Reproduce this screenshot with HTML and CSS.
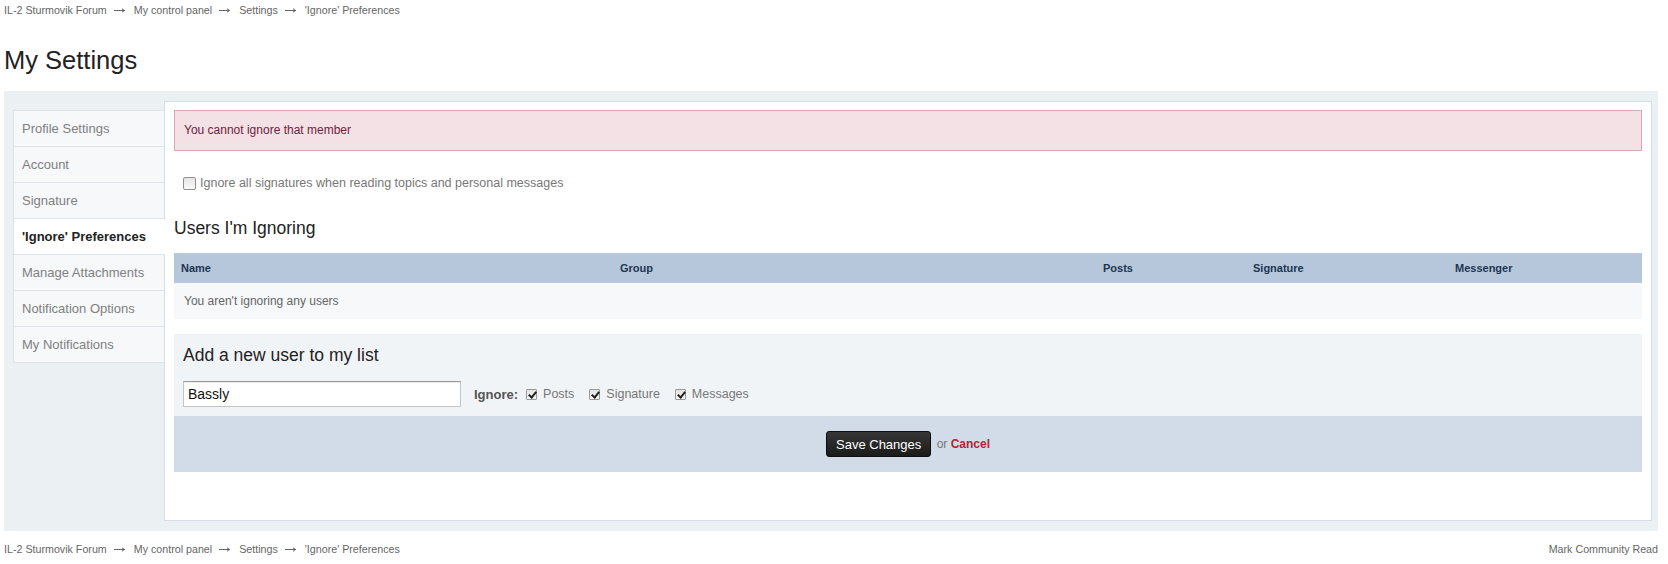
FILE: index.html
```html
<!DOCTYPE html>
<html lang="en">
<head>
    <meta charset="UTF-8">
    <title>My Settings - IL-2 Sturmovik Forum</title>
    <link rel="stylesheet" href="styles.css">
</head>
<body>
<div class="page">

    <div class="crumbs">
        <div class="trail">
            <a href="#">IL-2 Sturmovik Forum</a>
            <svg class="arrow" width="11" height="7" viewBox="0 0 11 7"><path d="M0 3.5H10.5M8 1.8L10.5 3.5L8 5.2" fill="none" stroke="#555" stroke-width="0.9"/></svg>
            <a href="#">My control panel</a>
            <svg class="arrow" width="11" height="7" viewBox="0 0 11 7"><path d="M0 3.5H10.5M8 1.8L10.5 3.5L8 5.2" fill="none" stroke="#555" stroke-width="0.9"/></svg>
            <a href="#">Settings</a>
            <svg class="arrow" width="11" height="7" viewBox="0 0 11 7"><path d="M0 3.5H10.5M8 1.8L10.5 3.5L8 5.2" fill="none" stroke="#555" stroke-width="0.9"/></svg>
            <a href="#">'Ignore' Preferences</a>
        </div>
    </div>

    <h1 class="title">My Settings</h1>

    <div class="layout">
        <ul class="tabs">
            <li><a href="#">Profile Settings</a></li>
            <li><a href="#">Account</a></li>
            <li><a href="#">Signature</a></li>
            <li class="active"><a href="#">'Ignore' Preferences</a></li>
            <li><a href="#">Manage Attachments</a></li>
            <li><a href="#">Notification Options</a></li>
            <li><a href="#">My Notifications</a></li>
        </ul>

        <div class="content">
            <div class="error">You cannot ignore that member</div>

            <label class="option">
                <input type="checkbox" class="check-plain">
                Ignore all signatures when reading topics and personal messages
            </label>

            <h2 class="section-title">Users I'm Ignoring</h2>

            <table class="list">
                <thead>
                    <tr>
                        <th class="col-name">Name</th>
                        <th class="col-group">Group</th>
                        <th class="col-posts">Posts</th>
                        <th class="col-sig">Signature</th>
                        <th>Messenger</th>
                    </tr>
                </thead>
                <tbody>
                    <tr>
                        <td colspan="5" class="empty">You aren't ignoring any users</td>
                    </tr>
                </tbody>
            </table>

            <div class="add-box">
                <h3>Add a new user to my list</h3>
                <div class="add-row">
                    <input type="text" class="text-input" value="Bassly">
                    <span class="ignore-label">Ignore:</span>
                    <label class="small-opt"><input type="checkbox" class="check-small" checked> Posts</label>
                    <label class="small-opt"><input type="checkbox" class="check-small" checked> Signature</label>
                    <label class="small-opt"><input type="checkbox" class="check-small" checked> Messages</label>
                </div>
            </div>

            <div class="submit-row">
                <button class="btn">Save Changes</button>
                <span class="or">or</span>
                <a href="#" class="cancel">Cancel</a>
            </div>
        </div>
    </div>

    <div class="crumbs bottom">
        <div class="trail">
            <a href="#">IL-2 Sturmovik Forum</a>
            <svg class="arrow" width="11" height="7" viewBox="0 0 11 7"><path d="M0 3.5H10.5M8 1.8L10.5 3.5L8 5.2" fill="none" stroke="#555" stroke-width="0.9"/></svg>
            <a href="#">My control panel</a>
            <svg class="arrow" width="11" height="7" viewBox="0 0 11 7"><path d="M0 3.5H10.5M8 1.8L10.5 3.5L8 5.2" fill="none" stroke="#555" stroke-width="0.9"/></svg>
            <a href="#">Settings</a>
            <svg class="arrow" width="11" height="7" viewBox="0 0 11 7"><path d="M0 3.5H10.5M8 1.8L10.5 3.5L8 5.2" fill="none" stroke="#555" stroke-width="0.9"/></svg>
            <a href="#">'Ignore' Preferences</a>
        </div>
        <a href="#" class="mark-read">Mark Community Read</a>
    </div>

</div>
</body>
</html>
```

FILE: styles.css
```css
body {
    margin: 0;
    font-family: 'Liberation Sans', Arial, sans-serif;
    font-size: 13px;
    color: #1c2837;
    background: #fff;
}

a {
    text-decoration: none;
}

.page {
    margin: 0 10px 0 4px;
}

/* Breadcrumbs */
.crumbs {
    display: flex;
    justify-content: space-between;
    padding-top: 3px;
    font-size: 10.7px;
    line-height: 14px;
}

.crumbs .trail {
    display: flex;
    align-items: center;
}

.crumbs a {
    color: #666;
}

.crumbs .arrow {
    margin: 1px 9px 0 7px;
}

.crumbs.bottom {
    padding-top: 0;
    margin-top: 11px;
}

.title {
    margin: 27px 0 0;
    font-size: 25.5px;
    line-height: 32px;
    font-weight: normal;
    color: #222;
}

/* Settings panel */
.layout {
    display: flex;
    align-items: flex-start;
    margin-top: 15px;
    padding: 10px 6px 10px 9px;
    background: #ebf0f3;
}

.tabs {
    width: 150px;
    flex-shrink: 0;
    margin: 9px 0 0;
    padding: 0;
    list-style: none;
    border-top: 1px solid #dde3e9;
    border-left: 1px solid #dde3e9;
}

.tabs li {
    height: 35px;
    line-height: 35px;
    background: #f6f8fa;
    border-bottom: 1px solid #dde3e9;
}

.tabs li a {
    display: block;
    padding-left: 8px;
    color: #808080;
}

.tabs li.active {
    position: relative;
    z-index: 1;
    margin-right: -1px;
    background: #fff;
}

.tabs li.active a {
    color: #222;
    font-weight: bold;
}

.content {
    flex: 1;
    background: #fff;
    border: 1px solid #d5dde5;
    padding: 8px 9px 8px 9px;
}

.error {
    padding: 11px 9px;
    font-size: 12px;
    line-height: 17px;
    color: #6e1f3d;
    background: #f3e1e5;
    border: 1px solid #d9a7b4;
}

.option {
    display: flex;
    align-items: center;
    margin-top: 22px;
    padding-left: 9px;
    line-height: 20px;
    font-size: 12.5px;
    color: #777;
}

.check-plain {
    appearance: none;
    width: 13px;
    height: 13px;
    margin: 0 4px 0 0;
    border: 1px solid #8e8f8f;
    border-radius: 2px;
    background: linear-gradient(#e6e6e6, #fafafa);
}

.section-title {
    margin: 23px 0 13px;
    font-size: 17.5px;
    line-height: 24px;
    font-weight: normal;
    color: #222;
}

/* Ignored users table */
.list {
    width: 100%;
    border-collapse: collapse;
}

.list th {
    height: 30px;
    padding: 0 7px;
    text-align: left;
    font-size: 11px;
    font-weight: bold;
    color: #1d3652;
    background: #b6c7db;
}

.list .col-name { width: 425px; }
.list .col-group { width: 469px; }
.list .col-posts { width: 136px; }
.list .col-sig { width: 188px; }

.list td.empty {
    height: 36px;
    padding: 0 10px;
    font-size: 12px;
    color: #666;
    background: #f6f8fa;
}

/* Add user box */
.add-box {
    margin-top: 15px;
    padding: 9px 9px;
    background: #f1f4f7;
}

.add-box h3 {
    margin: 0 0 14px;
    font-size: 17.5px;
    line-height: 24px;
    font-weight: normal;
    color: #222;
}

.add-row {
    display: flex;
    align-items: center;
}

.text-input {
    box-sizing: border-box;
    width: 278px;
    height: 26px;
    margin: 0 13px 0 0;
    padding: 0 4px;
    font-family: 'Liberation Sans', Arial, sans-serif;
    font-size: 14px;
    color: #111;
    border: 1px solid #c5c5c5;
    border-top-color: #9a9a9a;
    box-shadow: inset 0 1px 1px rgba(0, 0, 0, 0.08);
}

.ignore-label {
    margin-right: 8px;
    font-weight: bold;
    color: #555;
}

.small-opt {
    display: flex;
    align-items: center;
    margin-right: 15px;
    font-size: 12.5px;
    color: #777;
}

.check-small {
    appearance: none;
    position: relative;
    width: 11px;
    height: 11px;
    margin: 0 6px 0 0;
    border: 1px solid #9a9a9a;
    border-radius: 1px;
    background: linear-gradient(#e2e2e2, #f6f6f6);
}

.check-small:checked::after {
    content: "";
    position: absolute;
    left: 3px;
    top: 0px;
    width: 3px;
    height: 6px;
    border: solid #222;
    border-width: 0 2px 2px 0;
    transform: rotate(40deg);
}

/* Buttons */
.submit-row {
    margin-bottom: 40px;
    padding: 15px;
    text-align: center;
    background: #d1dce8;
    font-size: 12px;
}

.btn {
    height: 26px;
    padding: 0 9px;
    font-family: 'Liberation Sans', Arial, sans-serif;
    font-size: 13px;
    color: #fff;
    background: linear-gradient(#363636, #1b1b1b);
    border: 1px solid #0d0d0d;
    border-radius: 3px;
    vertical-align: middle;
    cursor: pointer;
}

.or {
    margin-left: 2px;
    color: #777;
    vertical-align: middle;
}

.cancel {
    font-weight: bold;
    color: #ad2930;
    vertical-align: middle;
}

.mark-read {
    color: #666;
}
```
